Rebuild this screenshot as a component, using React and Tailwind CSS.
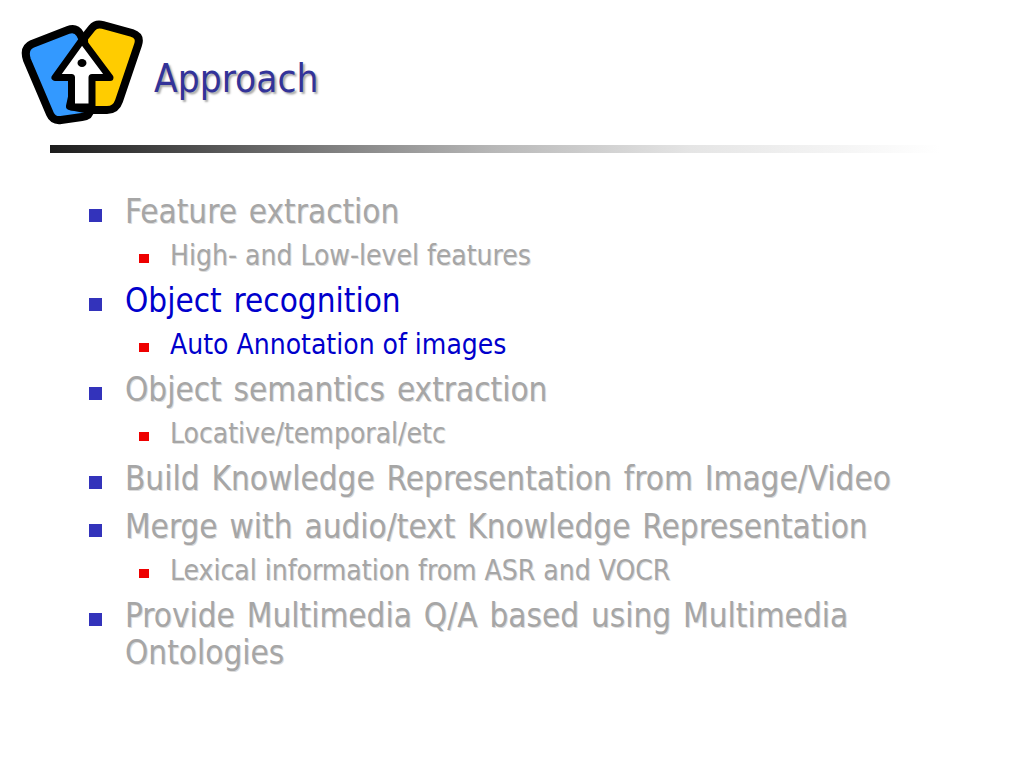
import { Fragment } from 'react';

const font = "font-['DejaVu_Sans_Condensed','DejaVu_Sans',sans-serif]";

const items = [
  { text: 'Feature extraction', subs: ['High- and Low-level features'] },
  { text: 'Object recognition', active: true, subs: ['Auto Annotation of images'] },
  { text: 'Object semantics extraction', subs: ['Locative/temporal/etc'] },
  { text: 'Build Knowledge Representation from Image/Video', subs: [] },
  { text: 'Merge with audio/text Knowledge Representation', subs: ['Lexical information from ASR and VOCR'] },
  { text: 'Provide Multimedia Q/A based using Multimedia Ontologies', subs: [] },
];

function Logo() {
  return (
    <svg width="124" height="106" viewBox="20 20 124 106" className="shrink-0">
      {/* yellow card */}
      <path
        d="M84 38 L92 28 Q96 23 103 25 L132 33 Q141 36 138 45 L119 101 Q116 110 107 110 L86 110 Z"
        fill="#ffcc00" stroke="#000" strokeWidth="8" strokeLinejoin="round"
      />
      {/* blue card */}
      <path
        d="M32 44 L68 30 Q76 27 80 34 L84 42 L70 106 L90 110 Q90 116 82 117 L61 120 Q53 121 50 114 L27 60 Q23 48 32 44 Z"
        fill="#3399ff" stroke="#000" strokeWidth="8" strokeLinejoin="round"
      />
      {/* arrow */}
      <path
        d="M82 40 L55 77.5 L71.5 77.5 L71.5 107 L92 107 L92 77.5 L110 77.5 Z"
        fill="#fff" stroke="#000" strokeWidth="7" strokeLinejoin="round"
      />
      <ellipse cx="82" cy="63" rx="4.5" ry="4" fill="#000" />
    </svg>
  );
}

function Row({ text, active, sub }) {
  const tone = active
    ? 'text-[#0000cc]'
    : 'text-[#a6a6a6] [text-shadow:1px_1px_0_#dcdcdc]';
  return (
    <li className={`flex ${sub ? 'mt-[10px] pl-[50px]' : 'mt-[11px] first:mt-0'}`}>
      <span className={`shrink-0 ${sub ? 'w-[31px] pt-[14px]' : 'w-[36px] pt-[16px]'}`}>
        <span className={sub ? 'block w-[10px] h-[9px] bg-[#ee0000]' : 'block w-[13px] h-[13px] bg-[#3333bb]'} />
      </span>
      <span className={`${tone} ${sub ? 'text-[28px] leading-[31px]' : 'text-[33px] leading-[37px] [word-spacing:2.5px]'}`}>{text}</span>
    </li>
  );
}

export default function App() {
  return (
    <div className={`w-[1024px] h-[768px] bg-white overflow-hidden ${font}`}>
      <header className="flex items-start pl-[20px] pt-[20px] h-[145px]">
        <Logo />
        <h1 className="ml-[10px] mt-[37px] text-[38.5px] leading-[44px] text-[#333399] [text-shadow:2px_2px_2px_#aaaaaa]">
          Approach
        </h1>
      </header>
      <div className="ml-[50px] w-[890px] h-[8px] bg-[linear-gradient(to_right,#1c1c1c,#808080_32%,#b8b8b8_50%,#e5e5e5_72%,#ffffff)]" />
      <ul className="pl-[89px] pr-[120px] pt-[40px]">
        {items.map((item) => (
          <Fragment key={item.text}>
            <Row text={item.text} active={item.active} />
            {item.subs.map((s) => (
              <Row key={s} text={s} active={item.active} sub />
            ))}
          </Fragment>
        ))}
      </ul>
    </div>
  );
}
